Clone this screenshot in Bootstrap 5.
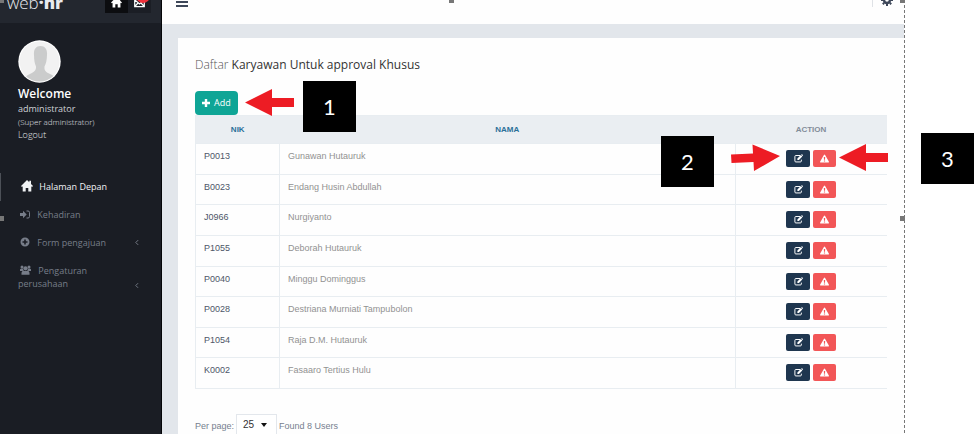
<!DOCTYPE html>
<html lang="id">
<head>
<meta charset="utf-8">
<meta name="viewport" content="width=device-width, initial-scale=1">
<title>web·hr</title>
<link href="https://cdn.jsdelivr.net/npm/bootstrap@5.3.0/dist/css/bootstrap.min.css" rel="stylesheet">
<style>
body{font-family:"Liberation Sans",Arial,sans-serif;font-size:9px;line-height:14px;color:#76808f;background:#fff}
svg{display:block}
.guide{min-height:100vh;padding-right:74px}
.shot{border-right:1px dashed #777;min-height:100vh}
.side{width:162px;background:#1a1d24;border-right:1px solid #050608;font-family:"Open Sans",sans-serif;color:#e3e6ea}
.brandbar{height:23px;background:#23272f;padding:0 10px 0 7px;overflow:hidden}
.logo{font-size:17px;line-height:24px;margin-top:-9px;color:#e8eaee;text-decoration:none;font-weight:300}
.logo b{font-weight:800}
.tool{width:23px;height:13px;border:0;padding:0;background:#1b1e25;color:#fff}
.tool.on{background:#0c0d10}
.badge-dot{top:-11px;right:1px;width:14px;height:14px;background:#f0323c;border-radius:50%}
.profile{padding:17px 18px 0}
.who{font-size:12px;line-height:17px;font-weight:600;color:#fff;margin-top:2px}
.plain{font-size:9px;line-height:13px;color:#cfd2d7}
.role{font-size:8px;line-height:13px;font-weight:300}
.logout{font-size:9px;line-height:14px;color:#e3e6ea;text-decoration:none;font-weight:300}
.menu{padding-top:31px}
.menu a{padding:7px 22px 8px 18px;font-size:9px;line-height:13px;color:#777d89;text-decoration:none}
.menu a.active{color:#f1f3f5;border-left:1px solid #4c5057;padding:7px 18px 7px 17px;line-height:14px}
.menu svg{display:inline-block;vertical-align:-1px;margin:0 5px 0 2px}
.menu a.active svg{margin-right:4px;vertical-align:-2px;margin-left:3px}
.menu svg.chev{margin:0 0 1px}
.main{background:#e2e6eb;min-width:0}
.topbar{height:24px;background:#fefefe;overflow:hidden;color:#3e4759}
.icon-btn{border:0;background:none;padding:0;color:#3e4759}
.burger{margin-left:14px}
.settings{border-left:1px solid #dfe2e6;height:7px;margin-right:11px;padding-left:8px}
.settings svg{margin-top:-7px}
.panel{background:#fefefe;margin:14px 0 0 16px;padding:16px 17px 0;flex:1}
.panel h1{font-family:"Open Sans",sans-serif;font-size:12px;line-height:22px;color:#333;font-weight:500;margin:0 0 15px}
.panel h1 span{font-weight:300;color:#555}
.add{font-family:"Open Sans",sans-serif;background:#0fa596;color:#fff;font-size:9px;line-height:14px;border:0;border-radius:4px;padding:5px 7px;height:24px}
.people{table-layout:fixed;height:274px;border:1px solid #e8edf1;border-right:0;border-collapse:collapse;margin:0;width:100%}
.people th{height:28px;background:#eaeef2;border:0;font-size:8px;line-height:12px;padding:0;text-align:center;vertical-align:middle;color:#838c99;font-weight:700}
.people th a{color:#2a7099;text-decoration:none}
.people td{border:1px solid #e8edf1;padding:4px 8px 6px;line-height:16px;color:#929292;background:none;vertical-align:top}
.people td:first-child{color:#4d5668}
.people td:last-child{border-right:0;padding:6px 0 0}
.acts{gap:3px}
.nik{width:84px}.act{width:152px}
.mini{border:0;border-radius:2px;padding:0;color:#fff;height:17px;width:24px}
.edit{background:#1f364f}.warn{background:#f25657;width:23px}
.pager{margin-top:25px;gap:2px}
.pager .form-select{width:41px;height:24px;padding:0 14px 2px 6px;font-size:10px;line-height:14px;border:1px solid #e3e7ec;border-radius:0;color:#333;background:linear-gradient(#fff,#fff);appearance:none}
.caret{right:10px;top:9px;border:3px solid transparent;border-top:4px solid #111;border-bottom:0;pointer-events:none}
.tag{width:53px;height:51px;background:#000;color:#fff;font-family:Lato,sans-serif;font-size:22px;line-height:24px}
.tag1{left:303px;top:81px}.tag2{left:661px;top:136px}.tag3{left:921px;top:133px}
.arrow{color:#ed1c24}
.arrow1{left:245px;top:89px}.arrow2{left:731px;top:144px}.arrow3{left:839px;top:144px}
.grip{width:5px;height:5px;background:#777}
.g1{left:-1px;top:-2px}.g2{left:449px;top:-2px}.g3{left:900px;top:-2px}.g4{left:-1px;top:216px}.g5{left:900px;top:216px}
</style>
<script src="https://cdn.jsdelivr.net/npm/bootstrap@5.3.0/dist/js/bootstrap.bundle.min.js"></script>
</head>
<body>
<svg class="d-none" xmlns="http://www.w3.org/2000/svg">
<symbol id="home" viewBox="0 0 12 12"><path fill="currentColor" d="M6 0 0 6l1 .9.7-.6V11.500h3V8h2.600v3.500h3V6.300l.7.6 1-.9-2-2V.8H8.300v1.500z"/></symbol>
<symbol id="edit" viewBox="0 0 12 12"><path fill="none" stroke="currentColor" stroke-width="1.300" d="M8 2H2.500Q1.200 2 1.200 3.300v6Q1.200 10.600 2.500 10.600h6Q9.800 10.600 9.800 9.300V7.500"/><path fill="currentColor" d="m4.500 6 4.600-4.600 2 2L6.500 8h-2zM9.600.9l.5-.5q.4-.4.8 0L12 1.500q.3.4 0 .8l-.5.5z"/></symbol>
<symbol id="warn" viewBox="0 0 12 12"><path fill="currentColor" fill-rule="evenodd" d="M6 .6q.5 0 .8.6l5 8.800q.4 1.200-.8 1.400H1Q-.2 11.200.2 10l5-8.800Q5.500.6 6 .6M5.100 4l.2 3.600h1.400L6.900 4zM5.200 8.500V10h1.600V8.500z"/></symbol>
<symbol id="chev" viewBox="0 0 5 8"><path d="M4 1 1 4l3 3" fill="none" stroke="currentColor" stroke-width="1.200"/></symbol>
</svg>
<div class="guide position-relative overflow-hidden">
<div class="shot d-flex">
<aside class="side flex-shrink-0">
<div class="brandbar d-flex align-items-start justify-content-between">
<a class="logo" href="#">web<b>·hr</b></a>
<div class="d-flex">
<button class="tool on d-flex justify-content-center" aria-label="Home"><svg width="11" height="9"><use href="#home" width="11" height="11" y="-3"/></svg></button>
<button class="tool position-relative d-flex justify-content-center" aria-label="Pesan"><svg width="11" height="8" viewBox="0 0 11 8"><path d="M.7 0v6.700h9.600V0M.7 6.500 4 3m6.300 3.500L7 3M1 0l4.500 4L10 0" fill="none" stroke="#fff" stroke-width="1.200"/></svg><span class="badge-dot position-absolute"></span></button>
</div>
</div>
<div class="profile">
<svg width="43" height="43" viewBox="0 0 43 43" role="img" aria-label="Foto profil"><defs><clipPath id="round"><circle cx="21.500" cy="21.500" r="20"/></clipPath></defs><circle cx="21.500" cy="21.500" r="21.200" fill="#fff"/><circle cx="21.500" cy="21.500" r="20" fill="#f2f2f2"/><path clip-path="url(#round)" fill="#cbcccc" d="M22.500 6c5 0 7 4 6.500 9-.1 5-1 9-2.500 11.500-.3 4 1 5.500 5.500 7.500 3 1.200 5 3 6 5v4H6v-4c1-2 3-4 6-5 4.500-2 6.200-3.500 6-7.500C16.800 24 16 20 16 15c-.5-5 1.500-9 6.500-9"/></svg>
<div class="who">Welcome</div>
<div class="plain">administrator</div>
<div class="role">(Super administrator)</div>
<a class="logout d-block" href="#">Logout</a>
</div>
<nav class="menu d-flex flex-column">
<a class="active" href="#"><svg width="12" height="12"><use href="#home"/></svg> Halaman Depan</a>
<a href="#"><svg width="10" height="9" viewBox="0 0 10 9"><path fill="currentColor" d="M0 3h3V.8l3.700 3.700L3 8.200V6H0z"/><path fill="none" stroke="currentColor" d="M6.500 1H8q1.500 0 1.500 1.500v4Q9.500 8 8 8H6.500"/></svg> Kehadiran</a>
<a class="d-flex align-items-center" href="#"><span class="flex-grow-1"><svg width="10" height="10" viewBox="0 0 10 10"><path fill="currentColor" fill-rule="evenodd" d="M5 .5a4.500 4.500 0 1 1 0 9 4.500 4.500 0 0 1 0-9M4.200 2.500v1.700H2.500v1.600h1.700v1.700h1.600V5.800h1.700V4.200H5.800V2.500z"/></svg> Form pengajuan</span><svg class="chev" width="4" height="7"><use href="#chev"/></svg></a>
<a class="d-flex align-items-end" href="#"><span class="flex-grow-1"><svg width="11" height="10" viewBox="0 0 11 10"><g fill="currentColor"><circle cx="2" cy="1.900" r="1.500"/><circle cx="9" cy="1.900" r="1.500"/><circle cx="5.500" cy="3.300" r="2.100"/><path d="M0 6V4.200q1-.9 3-.5l.5 1.600L2.500 6zm11 0V4.200q-1-.9-3-.5l-.5 1.600 1 .7zM1.500 9.800q-.4-4 2.200-4.300 1.800 1 3.600 0 2.600.3 2.200 4.300z"/></g></svg> Pengaturan perusahaan</span><svg class="chev" width="4" height="7"><use href="#chev"/></svg></a>
</nav>
</aside>
<main class="main flex-grow-1 d-flex flex-column">
<header class="topbar d-flex justify-content-between align-items-start flex-shrink-0">
<button class="icon-btn burger" aria-label="Menu"><svg width="12" height="8" viewBox="0 0 12 8"><path d="M0 2h12M0 6h12" stroke="currentColor" stroke-width="2"/></svg></button>
<button class="icon-btn settings" aria-label="Pengaturan"><svg width="12" height="12" viewBox="0 0 12 12"><circle cx="6" cy="6" r="3" fill="none" stroke="currentColor" stroke-width="2.400"/><path d="M6 0v2m0 8v2M0 6h2m8 0h2M1.800 1.800l1.400 1.400m5.600 5.600 1.400 1.400m0-8.400L8.800 3.200M3.200 8.800l-1.400 1.400" stroke="currentColor" stroke-width="2"/></svg></button>
</header>
<section class="panel">
<h1><span>Daftar</span> Karyawan Untuk approval Khusus</h1>
<button class="add d-flex align-items-center gap-1"><svg width="8" height="8" viewBox="0 0 8 8"><path d="M4 0v8M0 4h8" stroke="#fff" stroke-width="2.400"/></svg>Add</button>
<table class="people">
<colgroup><col class="nik"><col><col class="act"></colgroup>
<thead><tr><th><a href="#">NIK</a></th><th><a href="#">NAMA</a></th><th>ACTION</th></tr></thead>
<tbody id="rows"></tbody>
</table>
<div class="pager d-flex align-items-center"><label for="per">Per page:</label>
<div class="position-relative"><select id="per" class="form-select"><option>25</option><option>50</option></select><span class="caret position-absolute"></span></div>
<span>Found 8 Users</span></div>
</section>
</main>
</div>
<div class="tag tag1 position-absolute d-flex align-items-center justify-content-center">1</div>
<div class="tag tag2 position-absolute d-flex align-items-center justify-content-center">2</div>
<div class="tag tag3 position-absolute d-flex align-items-center justify-content-center">3</div>
<svg class="arrow arrow1 position-absolute" width="49" height="27"><path fill="currentColor" d="M0 13.500 27 0v9h22v9H27v9z"/></svg>
<svg class="arrow arrow2 position-absolute" width="49" height="28"><path fill="currentColor" d="M0 10.500 22 9.500 21.500.5 49 12 23 27l-.5-9L.5 19z"/></svg>
<svg class="arrow arrow3 position-absolute" width="49" height="27"><path fill="currentColor" d="M0 13.500 27 0v9h22v9H27v9z"/></svg>
<i class="grip g1 position-absolute"></i><i class="grip g2 position-absolute"></i><i class="grip g3 position-absolute"></i><i class="grip g4 position-absolute"></i><i class="grip g5 position-absolute"></i>
</div>
<script>
const people=[["P0013","Gunawan Hutauruk"],["B0023","Endang Husin Abdullah"],["J0966","Nurgiyanto"],["P1055","Deborah Hutauruk"],["P0040","Minggu Dominggus"],["P0028","Destriana Murniati Tampubolon"],["P1054","Raja D.M. Hutauruk"],["K0002","Fasaaro Tertius Hulu"]];
document.getElementById("rows").innerHTML=people.map(([id,name])=>`<tr><td>${id}</td><td>${name}</td><td><div class="acts d-flex justify-content-center"><button class="mini edit d-flex align-items-center justify-content-center" aria-label="Edit ${name}"><svg width="9" height="9" viewBox="0 0 12 12"><use href="#edit"/></svg></button><button class="mini warn d-flex align-items-center justify-content-center" aria-label="Hapus ${name}"><svg width="9" height="9"><use href="#warn"/></svg></button></div></td></tr>`).join("");
</script>
</body>
</html>
